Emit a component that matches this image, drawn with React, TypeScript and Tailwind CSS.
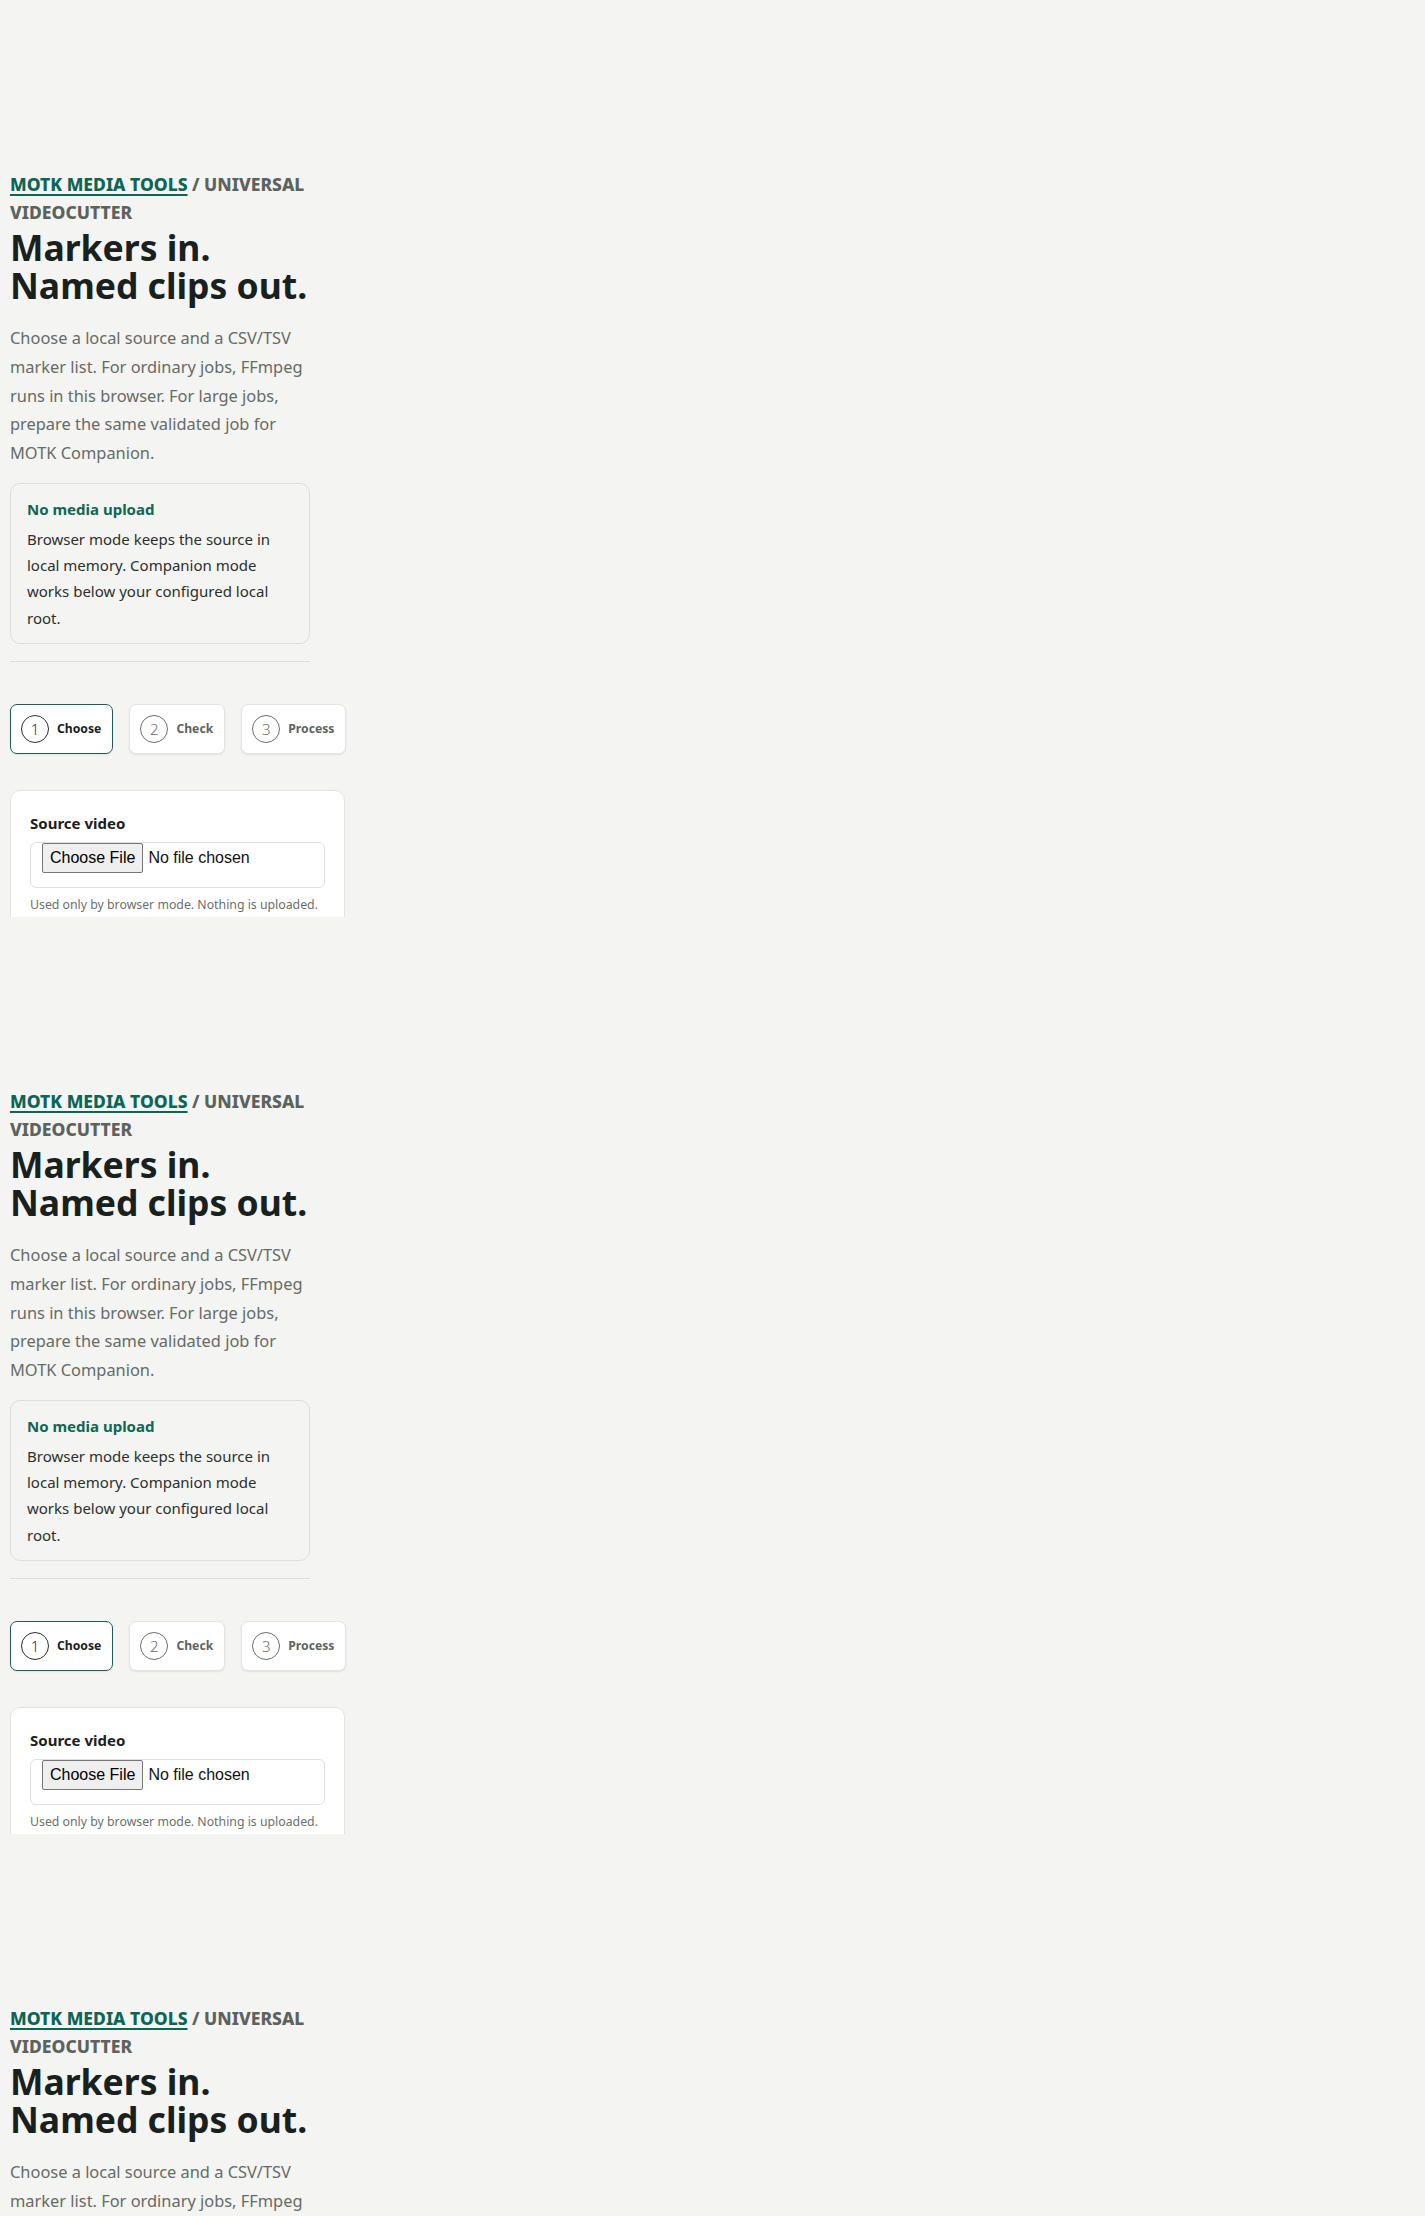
const steps = [
  { n: 1, label: "Choose", active: true },
  { n: 2, label: "Check", active: false },
  { n: 3, label: "Process", active: false },
];

const StepTab = ({ n, label, active }: { n: number; label: string; active: boolean }) => (
  <button
    className={`flex h-[50px] items-center gap-[8px] rounded-[7px] bg-white pl-[10px] pr-[11px] shadow-[0_1px_2px_rgba(0,0,0,0.08)] ${
      active ? "border-[1.5px] border-[#1f5e56]" : "border border-[#e3e3e0]"
    }`}
  >
    <span
      className={`flex h-[28px] w-[28px] items-center justify-center rounded-full border text-[15px] font-light ${
        active ? "border-[#2a2f2c] text-[#2a2f2c]" : "border-[#6a706c] text-[#6a706c]"
      }`}
    >
      {n}
    </span>
    <span className={`text-[12.2px] font-bold ${active ? "text-[#1b201e]" : "text-[#5e6460]"}`}>{label}</span>
  </button>
);

const Screen = () => (
  <section className="h-[917px] overflow-hidden pl-[10px] pt-[171px]">
    {/* Hero */}
    <header className="w-[300px]">
      <p className="text-[17.5px] font-extrabold uppercase leading-[27.5px] text-[#5c625e]">
        <a href="#" className="text-[#0c6655] underline decoration-[1.5px] underline-offset-[3px]">
          MOTK Media Tools
        </a>
        <span> / Universal Videocutter</span>
      </p>
      <h1 className="mt-[3px] whitespace-nowrap text-[35.5px] font-bold leading-[37.6px] text-[#19211e]">
        Markers in.
        <br />
        Named clips out.
      </h1>
      <p className="mt-[20px] text-[16.4px] leading-[28.7px] text-[#656b67]">
        Choose a local source and a CSV/TSV marker list. For ordinary jobs, FFmpeg runs in this browser. For large
        jobs, prepare the same validated job for MOTK Companion.
      </p>

      <div className="mt-[15px] rounded-[10px] border border-[#dededb] px-[16px] pb-[12px] pt-[14px]">
        <h2 className="text-[15px] font-bold leading-[22px] text-[#0e6655]">No media upload</h2>
        <p className="mt-[6px] text-[15px] leading-[26.3px] text-[#2b302d]">
          Browser mode keeps the source in local memory. Companion mode works below your configured local root.
        </p>
      </div>
      <hr className="mt-[17px] border-t border-[#dededb]" />
    </header>

    {/* Workflow tabs */}
    <nav className="mt-[42px] flex gap-[16px]">
      {steps.map((s) => (
        <StepTab key={s.n} {...s} />
      ))}
    </nav>

    {/* Source panel */}
    <div className="mt-[36px] w-[335px] rounded-[10px] border border-[#e3e3e0] bg-white px-[19px] pb-[20px] pt-[21px]">
      <label className="block text-[15px] font-bold leading-[22px] text-[#1b201e]">Source video</label>
      <input
        type="file"
        className="mt-[8px] block h-[46px] w-full rounded-[6px] border border-[#e0e0dd] bg-white px-[11px] font-['Liberation_Sans',Arial,sans-serif] text-[16px] text-[#111] file:mr-[5px] file:rounded-[2px] file:border file:border-[#767676] file:bg-[#efefef] file:px-[7px] file:py-[2px] file:text-black"
      />
      <p className="mt-[7px] whitespace-nowrap text-[12.3px] leading-[20px] text-[#6a6f6b]">
        Used only by browser mode. Nothing is uploaded.
      </p>
    </div>
  </section>
);

export default function App() {
  return (
    <div className="h-[2216px] overflow-hidden bg-[#f4f4f2] font-['Noto_Sans','Open_Sans',sans-serif]">
      <Screen />
      <Screen />
      <Screen />
    </div>
  );
}
